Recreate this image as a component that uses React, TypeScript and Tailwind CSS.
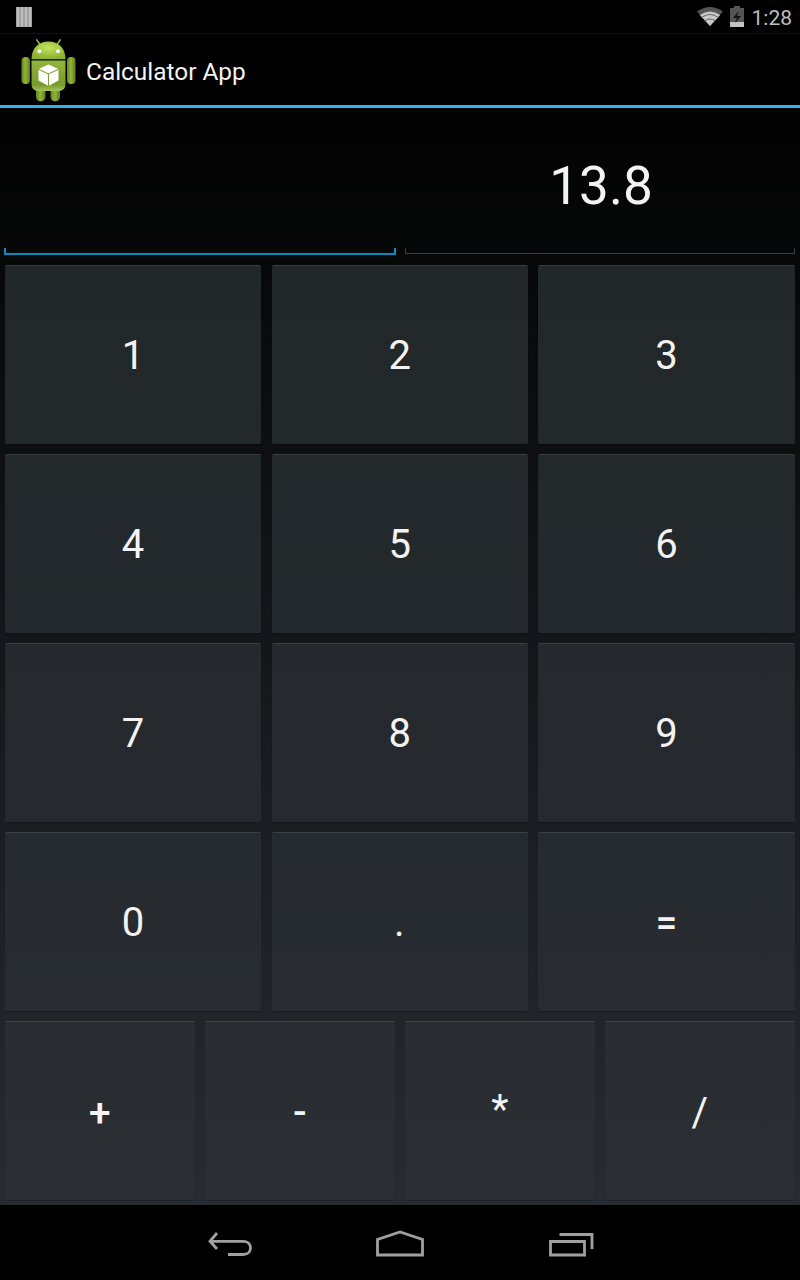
import React from "react";

const rows = [
  { keys: ["1", "2", "3"], bg: "from-[#22272a] to-[#23282b]", edge: "border-t-[#393d40]" },
  { keys: ["4", "5", "6"], bg: "from-[#23282b] to-[#24292d]", edge: "border-t-[#3a3e41]" },
  { keys: ["7", "8", "9"], bg: "from-[#25292d] to-[#262a30]", edge: "border-t-[#3b3f43]" },
  { keys: ["0", ".", "="], bg: "from-[#262b2f] to-[#282c32]", edge: "border-t-[#3d4145]" },
  { keys: ["+", "-", "*", "/"], bg: "from-[#292d32] to-[#2a2e33]", edge: "border-t-[#3f4347]" },
];

const glyphStyles: Record<string, string> = {
  "+": "pt-[2px] text-[39px] font-medium",
  "=": "pt-[1px] text-[38px] font-medium",
  "-": "pt-[3px] font-medium",
  "*": "pb-[3px]",
  "/": "pt-[3px]",
  ".": "pr-[1px]",
};

function Robot() {
  return (
    <svg className="ml-4 h-16 w-16 shrink-0" viewBox="0 0 64 64">
      <defs>
        <radialGradient id="head" cx="0.5" cy="0.35" r="0.65">
          <stop offset="0" stopColor="#c0e45c" />
          <stop offset="1" stopColor="#8bb02f" />
        </radialGradient>
        <linearGradient id="body" x1="0" y1="0" x2="0" y2="1">
          <stop offset="0" stopColor="#94b53c" />
          <stop offset="0.8" stopColor="#779a2b" />
          <stop offset="1" stopColor="#a5c45c" />
        </linearGradient>
        <linearGradient id="limb" x1="0" y1="0" x2="1" y2="0">
          <stop offset="0" stopColor="#64851f" />
          <stop offset="0.45" stopColor="#92b43a" />
          <stop offset="1" stopColor="#5f7d20" />
        </linearGradient>
      </defs>
      <path d="M24 6.500L20.800 1.800M41 6.500L44.200 1.800" stroke="#9ac13c" strokeWidth="1.500" strokeLinecap="round" />
      <rect x="20" y="44" width="9.500" height="19.300" rx="4.500" fill="url(#limb)" />
      <rect x="34.500" y="44" width="9.500" height="19.300" rx="4.500" fill="url(#limb)" />
      <rect x="5.500" y="19" width="8.500" height="27" rx="4" fill="url(#limb)" />
      <rect x="51" y="19" width="8.500" height="27" rx="4" fill="url(#limb)" />
      <path d="M15.500 21.200C15.500 10 22.500 3.500 32.500 3.500S49.500 10 49.500 21.200Z" fill="url(#head)" />
      <path d="M15.500 22.500H49.500V46Q49.500 53 42.500 53H22.500Q15.500 53 15.500 46Z" fill="url(#body)" />
      <circle cx="23.500" cy="13.200" r="1.900" fill="#fff" />
      <circle cx="42" cy="13.200" r="1.900" fill="#fff" />
      <path d="M32.500 26.500L42.500 31V42.500L32.500 48L22.500 42.500V31Z" fill="#fff" />
      <path d="M22.500 31.300L32.500 36L42.500 31.300M32.500 36V48" fill="none" stroke="#819f38" strokeWidth="1.100" />
    </svg>
  );
}

export default function App() {
  return (
    <div className="flex h-[1280px] w-[800px] flex-col overflow-hidden bg-black font-['Roboto',sans-serif] text-[#f3f3f3]">
      <div className="flex h-[33px] shrink-0 items-center justify-between pl-4 pr-2">
        <svg className="h-5 w-4" viewBox="0 0 16 20">
          <rect width="16" height="20" fill="#8a8a8a" />
          <path d="M2 0V20M6 0V20M10 0V20M14 0V20" stroke="#bdbdbd" strokeWidth="2.800" />
        </svg>
        <div className="flex items-center text-[#bdbdbd]">
          <svg className="mr-[7px] h-5 w-[26px]" viewBox="0 0 26 20">
            <path d="M0 4.500Q13-4.500 26 4.500L13 19Z" fill="#555" />
            <path d="M2.800 8Q13 1 23.200 8L13 19Z" fill="#c8c8c8" />
            <path d="M4.500 10.500Q13 4.500 21.500 10.500M7.500 14Q13 10 18.500 14" fill="none" stroke="#666" strokeWidth="1" />
          </svg>
          <svg className="mr-2 h-[21px] w-[14px]" viewBox="0 0 14 21">
            <path d="M4 0H10V2H14V21H0V2H4Z" fill="#555" />
            <path d="M0 16H14V21H0Z" fill="#c4c4c4" />
            <path d="M9 5L3 12H7L5 17L11 10H7Z" fill="#111" />
          </svg>
          <span className="pt-[3px] text-[21px] leading-none">1:28</span>
        </div>
      </div>
      <header className="flex h-[75px] shrink-0 items-center border-t border-b-[3px] border-t-[#101010] border-b-[#33b5e5]">
        <Robot />
        <h1 className="ml-[6px] pt-[5px] text-[24.400px]">Calculator App</h1>
      </header>
      <main className="flex h-[1097px] shrink-0 flex-col bg-linear-to-b/srgb from-[#020202] to-[#272c32]">
        <div className="grid h-[152px] shrink-0 grid-cols-2">
          <div className="flex items-end px-[4px] pb-[5px]">
            <div className="h-[7px] w-full border-x-2 border-b-2 border-[#078bb9]" />
          </div>
          <div className="flex flex-col justify-between px-[5px] pb-[6px]">
            <div className="pt-[44px] pl-[2px] text-center text-[53px] leading-[68px]">13.8</div>
            <div className="h-[6px] border border-t-0 border-[#3a3b3c]" />
          </div>
        </div>
        {rows.map((row) => (
          <div key={row.keys[0]} className="flex h-[189px] shrink-0">
            {row.keys.map((key) => (
              <div key={key} className="flex flex-1 pt-[5px] pr-[5.500px] pb-[5.500px] pl-[5px]">
                <button className={`flex flex-1 items-center justify-center rounded-[2px] border-t-[1.500px] bg-linear-to-b/srgb pt-[2px] text-[40px] shadow-[0_1px_1px_#00000040] ${row.bg} ${row.edge}`}>
                  <span className={glyphStyles[key] ?? ""}>{key}</span>
                </button>
              </div>
            ))}
          </div>
        ))}
      </main>
      <nav className="flex h-[75px] shrink-0 items-center justify-center">
        <svg className="h-[75px] w-[400px]" viewBox="200 1205 400 75" fill="none" stroke="#a0a0a0" strokeWidth="2.800">
          <path d="M210 1241.300H243C253 1241.300 253 1254.500 243 1254.500H228M217 1233L210 1241.300L217 1249" />
          <path d="M377.500 1255V1239.500L400 1232L422.500 1239.500V1255Z" />
          <path d="M550.500 1241.500H584.500V1255H550.500ZM559.500 1234.500H592V1249" />
        </svg>
      </nav>
    </div>
  );
}
